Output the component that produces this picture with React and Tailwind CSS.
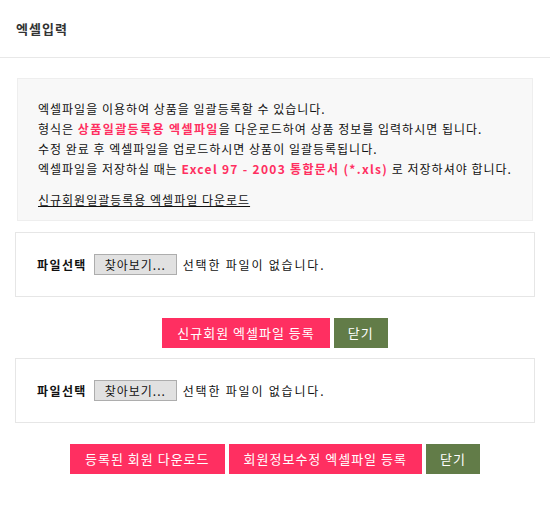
import React from 'react';

const font = { fontFamily: '"Noto Sans CJK KR", "Noto Sans", sans-serif' };

const FileRow = () => (
  <div className="mx-[15px] border border-[#e6e6e6] bg-white h-[65px] flex items-center pl-[21px]">
    <span className="text-[12px] font-bold text-[#111] mr-[7px] tracking-[1.4px]">파일선택</span>
    <button
      type="button"
      className="h-[21px] w-[83px] border border-[#adadad] bg-[#e1e1e1] text-[12px] text-[#111] leading-none flex items-center justify-center tracking-[1px]"
    >
      찾아보기...
    </button>
    <span className="text-[12px] text-[#111] ml-[6px] tracking-[1.8px]">선택한 파일이 없습니다.</span>
  </div>
);

const PinkBtn = ({ children }) => (
  <button type="button" className="h-[30px] px-[15px] bg-[#ff2f61] text-white text-[13px] tracking-[1px]">
    {children}
  </button>
);

const CloseBtn = () => (
  <button type="button" className="h-[30px] w-[54px] bg-[#627c48] text-white text-[13px] tracking-[1px]">
    닫기
  </button>
);

export default function App() {
  return (
    <div className="w-[550px] h-[522px] bg-white text-[#222]" style={font}>
      <div className="h-[58px] border-b border-[#e8e8e8] flex items-center pl-[16px]">
        <h1 className="text-[13px] font-bold text-[#333] tracking-[1px]">엑셀입력</h1>
      </div>

      <div className="mx-[17px] mt-[20px] border border-[#eeeeee] bg-[#f8f8f8] pl-[20px] pt-[20px] pb-[10px] text-[12px] leading-[20px] text-[#111] tracking-[1px]">
        <p>엑셀파일을 이용하여 상품을 일괄등록할 수 있습니다.</p>
        <p>
          형식은 <b className="text-[#ff2f61] tracking-[1.4px]">상품일괄등록용 엑셀파일</b>을 다운로드하여 상품 정보를 입력하시면 됩니다.
        </p>
        <p>수정 완료 후 엑셀파일을 업로드하시면 상품이 일괄등록됩니다.</p>
        <p>
          엑셀파일을 저장하실 때는 <b className="text-[#ff2f61] tracking-[1.3px]">Excel 97 - 2003 통합문서 (*.xls)</b> 로 저장하셔야 합니다.
        </p>
        <p className="mt-[11px]">
          <a href="#" className="underline text-[#111]">신규회원일괄등록용 엑셀파일 다운로드</a>
        </p>
      </div>

      <div className="mt-[11px]">
        <FileRow />
      </div>

      <div className="flex justify-center gap-[4px] mt-[21px]">
        <PinkBtn>신규회원 엑셀파일 등록</PinkBtn>
        <CloseBtn />
      </div>

      <div className="mt-[10px]">
        <FileRow />
      </div>

      <div className="flex justify-center gap-[4px] mt-[21px]">
        <PinkBtn>등록된 회원 다운로드</PinkBtn>
        <PinkBtn>회원정보수정 엑셀파일 등록</PinkBtn>
        <CloseBtn />
      </div>
    </div>
  );
}
